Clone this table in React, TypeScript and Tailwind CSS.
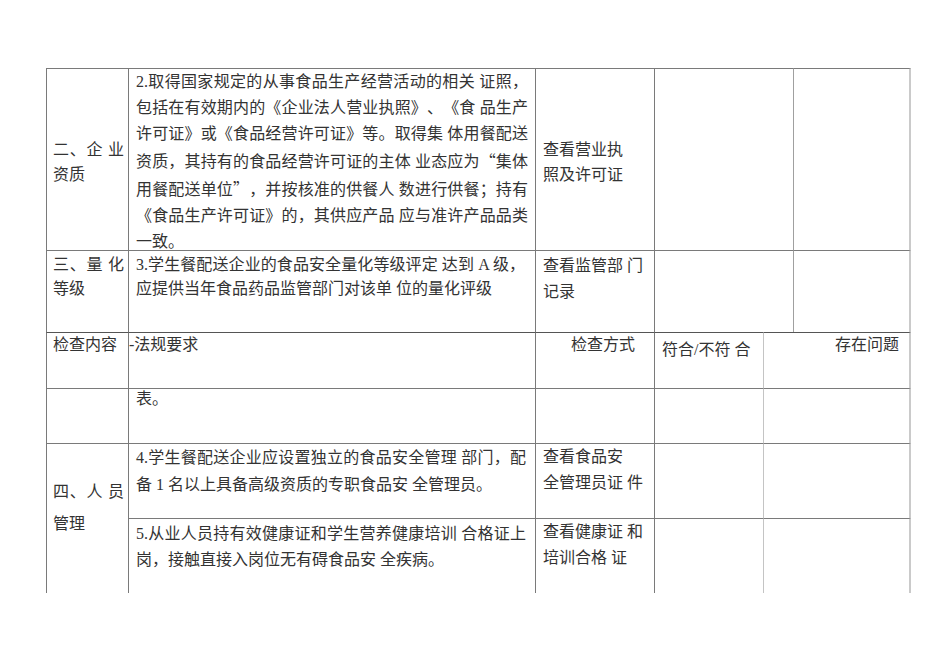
import React from "react";

const J = "whitespace-nowrap [text-align-last:justify] text-justify";
const N = "whitespace-nowrap";

type L = { t: React.ReactNode; j?: boolean };

function Lines({ lines, cls = "" }: { lines: L[]; cls?: string }) {
  return (
    <div className={cls}>
      {lines.map((l, i) => (
        <div key={i} className={l.j ? J : N}>
          {l.t}
        </div>
      ))}
    </div>
  );
}

const Q = ({ c }: { c: string }) => <span className="font-['Noto_Sans_CJK_SC',sans-serif]">{c}</span>;

export default function App() {
  const cell = "border-l border-t border-[#7a7a7a]";
  const last = "border-l border-t border-t-[#7a7a7a] border-r-2 border-r-[#cacaca]";
  return (
    <div className="min-h-[672px] w-[950px] bg-white pl-[46px] pt-[68px] text-[16px] text-[#333333] [text-spacing-trim:space-all] font-['Liberation_Serif','Noto_Sans_CJK_SC',serif]">
      {/* upper part */}
      <div className="grid grid-cols-[82px_407px_119px_139px_118px] grid-rows-[182px_82px]">
        {/* row 1 */}
        <div className={`${cell} flex flex-col justify-center pl-[6px] pr-[4px] pt-[4px] leading-[25px]`}>
          <Lines lines={[{ t: "二、企 业", j: true }, { t: "资质" }]} />
        </div>
        <div className={`${cell} pl-[7px] pr-[7px] leading-[26px]`}>
          <Lines
            lines={[
              { t: "2.取得国家规定的从事食品生产经营活动的相关 证照，", j: true },
              { t: "包括在有效期内的《企业法人营业执照》、《食 品生产", j: true },
              { t: "许可证》或《食品经营许可证》等。取得集 体用餐配送", j: true },
              { t: <>资质，其持有的食品经营许可证的主体 业态应为<Q c="“" />集体</>, j: true },
              { t: <>用餐配送单位<Q c="”" />，并按核准的供餐人 数进行供餐；持有</>, j: true },
              { t: "《食品生产许可证》的，其供应产品 应与准许产品品类", j: true },
              { t: "一致。" },
            ]}
          />
        </div>
        <div className={`${cell} flex flex-col justify-center pl-[7px] pt-[4px] leading-[25px]`}>
          <Lines lines={[{ t: "查看营业执" }, { t: "照及许可证" }]} />
        </div>
        <div className={cell}></div>
        <div className={`${last} border-l-[#a0a0a0]`}></div>

        {/* row 2 */}
        <div className={`${cell} pl-[6px] pr-[4px] pt-[2px] leading-[24px]`}>
          <Lines lines={[{ t: "三、量 化", j: true }, { t: "等级" }]} />
        </div>
        <div className={`${cell} pl-[7px] pr-[10px] pt-[2px] leading-[24px]`}>
          <Lines
            lines={[
              { t: "3.学生餐配送企业的食品安全量化等级评定 达到 A 级，", j: true },
              { t: "应提供当年食品药品监管部门对该单 位的量化评级" },
            ]}
          />
        </div>
        <div className={`${cell} pl-[7px] pt-[2px] leading-[26px]`}>
          <Lines lines={[{ t: "查看监管部 门" }, { t: "记录" }]} />
        </div>
        <div className={cell}></div>
        <div className={`${last} border-l-[#a0a0a0]`}></div>
      </div>

      {/* lower part */}
      <div className="grid grid-cols-[82px_407px_119px_109px_148px] grid-rows-[56px_55px_75px_75px]">
        {/* header */}
        <div className="border-l border-t border-l-[#7a7a7a] border-t-[#555555] pl-[6px] leading-[24px]">
          <div className={N}>检查内容</div>
        </div>
        <div className="border-l border-t border-l-[#7a7a7a] border-t-[#555555] leading-[24px]">
          <div className={N}>-法规要求</div>
        </div>
        <div className="border-l border-t border-l-[#7a7a7a] border-t-[#555555] pl-[35px] leading-[24px]">
          <div className={N}>检查方式</div>
        </div>
        <div className="border-l border-t border-l-[#7a7a7a] border-t-[#555555] pl-[7px] pt-[5px] leading-[24px]">
          <div className={N}>符合/不符 合</div>
        </div>
        <div className="border-l border-t border-l-[#c4c4c4] border-t-[#555555] border-r-2 border-r-[#cacaca] pl-[71px] leading-[24px]">
          <div className={N}>存在问题</div>
        </div>

        {/* row 4 */}
        <div className={cell}></div>
        <div className={`${cell} pl-[7px] leading-[20px]`}>
          <div className={N}>表。</div>
        </div>
        <div className={cell}></div>
        <div className={cell}></div>
        <div className={`${last} border-l-[#c4c4c4]`}></div>

        {/* row 5 & 6 */}
        <div className={`${cell} row-span-2 pl-[6px] pr-[4px] pt-[32px] leading-[32px]`}>
          <Lines lines={[{ t: "四、人 员", j: true }, { t: "管理" }]} />
        </div>
        <div className={`${cell} pl-[7px] pr-[9px] leading-[27px]`}>
          <Lines
            lines={[
              { t: "4.学生餐配送企业应设置独立的食品安全管理 部门，配", j: true },
              { t: "备 1 名以上具备高级资质的专职食品安 全管理员。" },
            ]}
          />
        </div>
        <div className={`${cell} pl-[7px] leading-[26px]`}>
          <Lines lines={[{ t: "查看食品安" }, { t: "全管理员证 件" }]} />
        </div>
        <div className={cell}></div>
        <div className={`${last} border-l-[#c4c4c4]`}></div>

        <div className={`${cell} pl-[7px] pr-[9px] pt-[2px] leading-[26px]`}>
          <Lines
            lines={[
              { t: "5.从业人员持有效健康证和学生营养健康培训 合格证上", j: true },
              { t: "岗，接触直接入岗位无有碍食品安 全疾病。" },
            ]}
          />
        </div>
        <div className={`${cell} pl-[7px] leading-[26px]`}>
          <Lines lines={[{ t: "查看健康证 和" }, { t: "培训合格 证" }]} />
        </div>
        <div className={cell}></div>
        <div className={`${last} border-l-[#c4c4c4]`}></div>
      </div>
    </div>
  );
}
